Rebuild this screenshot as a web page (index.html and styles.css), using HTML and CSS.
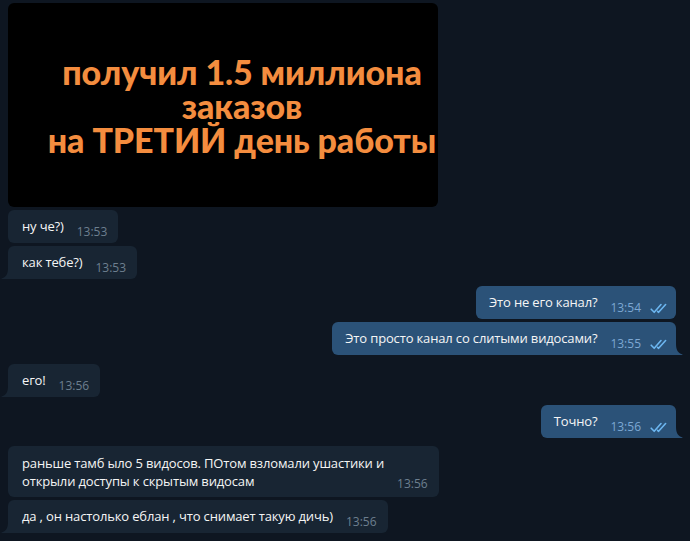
FILE: index.html
```html
<!DOCTYPE html>
<html lang="ru">
<head>
<meta charset="utf-8">
<link rel="stylesheet" href="styles.css">
</head>
<body>
<div class="chat">
  <div class="row in">
    <div class="photo">
      <div class="photo-text">получил 1.5 миллиона<br>заказов<br>на ТРЕТИЙ день работы</div>
    </div>
  </div>
  <div class="row in gap-s">
    <div class="bubble"><span class="text">ну че?)</span><span class="time">13:53</span></div>
  </div>
  <div class="row in gap-s">
    <div class="bubble tail"><span class="text">как тебе?)</span><span class="time">13:53</span>
      <svg class="tail-l" width="7" height="11" viewBox="0 0 7 11"><path d="M7 0 C7 6 5 9 1 10.2 Q0 10.6 0.6 11 H7 Z" fill="#182533"/></svg>
    </div>
  </div>
  <div class="row out gap-m">
    <div class="bubble"><span class="text">Это не его канал?</span><span class="time">13:54</span>
      <svg class="check" width="17" height="11" viewBox="0 0 17 11"><path d="M1.2 6.2 L4.2 9.3 L11 1.5 M7.6 8.4 L8.6 9.3 L15.6 1.5" stroke="#6cb6f0" stroke-width="1.6" fill="none" stroke-linecap="round" stroke-linejoin="round"/></svg>
    </div>
  </div>
  <div class="row out gap-s">
    <div class="bubble tail"><span class="text">Это просто канал со слитыми видосами?</span><span class="time">13:55</span>
      <svg class="check" width="17" height="11" viewBox="0 0 17 11"><path d="M1.2 6.2 L4.2 9.3 L11 1.5 M7.6 8.4 L8.6 9.3 L15.6 1.5" stroke="#6cb6f0" stroke-width="1.6" fill="none" stroke-linecap="round" stroke-linejoin="round"/></svg>
      <svg class="tail-r" width="7" height="11" viewBox="0 0 7 11"><path d="M0 0 C0 6 2 9 6 10.2 Q7 10.6 6.4 11 H0 Z" fill="#2b5278"/></svg>
    </div>
  </div>
  <div class="row in gap-xl">
    <div class="bubble tail"><span class="text">его!</span><span class="time">13:56</span>
      <svg class="tail-l" width="7" height="11" viewBox="0 0 7 11"><path d="M7 0 C7 6 5 9 1 10.2 Q0 10.6 0.6 11 H7 Z" fill="#182533"/></svg>
    </div>
  </div>
  <div class="row out gap-l">
    <div class="bubble tail"><span class="text">Точно?</span><span class="time">13:56</span>
      <svg class="check" width="17" height="11" viewBox="0 0 17 11"><path d="M1.2 6.2 L4.2 9.3 L11 1.5 M7.6 8.4 L8.6 9.3 L15.6 1.5" stroke="#6cb6f0" stroke-width="1.6" fill="none" stroke-linecap="round" stroke-linejoin="round"/></svg>
      <svg class="tail-r" width="7" height="11" viewBox="0 0 7 11"><path d="M0 0 C0 6 2 9 6 10.2 Q7 10.6 6.4 11 H0 Z" fill="#2b5278"/></svg>
    </div>
  </div>
  <div class="row in gap-l">
    <div class="bubble multi"><span class="text">раньше тамб ыло 5 видосов. ПОтом взломали ушастики и<br>открыли доступы к скрытым видосам</span><span class="time">13:56</span></div>
  </div>
  <div class="row in gap-s">
    <div class="bubble tail"><span class="text">да , он настолько еблан , что снимает такую дичь)</span><span class="time">13:56</span>
      <svg class="tail-l" width="7" height="11" viewBox="0 0 7 11"><path d="M7 0 C7 6 5 9 1 10.2 Q0 10.6 0.6 11 H7 Z" fill="#182533"/></svg>
    </div>
  </div>
</div>
</body>
</html>
```

FILE: styles.css
```css
html, body {
  margin: 0;
  padding: 0;
  background: #0e1621;
  height: 100%;
}

body {
  font-family: "Open Sans", "Noto Sans", sans-serif;
  color: #f5f5f5;
  overflow: hidden;
}

.chat {
  display: flex;
  flex-direction: column;
  padding: 3px 14px 0 8px;
}

.row {
  display: flex;
}

.row.in {
  justify-content: flex-start;
}

.row.out {
  justify-content: flex-end;
}

.row.gap-s {
  margin-top: 3px;
}

.row.gap-m {
  margin-top: 7px;
}

.row.gap-l {
  margin-top: 8px;
}

.row.gap-xl {
  margin-top: 9px;
}

.photo {
  width: 430px;
  height: 204px;
  background: #000;
  border-radius: 6px;
  display: flex;
  align-items: flex-start;
  justify-content: center;
}

.photo-text {
  margin-top: 52px;
  padding-left: 38px;
  font-family: Lato, "Noto Sans", sans-serif;
  font-weight: 900;
  font-size: 34px;
  line-height: 34px;
  color: #f48d3f;
  text-align: center;
  white-space: nowrap;
  letter-spacing: -0.1px;
}

.bubble {
  position: relative;
  display: flex;
  align-items: flex-end;
  gap: 13px;
  padding: 7px 11px 4px 14px;
  border-radius: 6px;
  font-size: 13px;
  letter-spacing: -0.15px;
}

.row.in .bubble {
  background: #182533;
}

.row.out .bubble {
  background: #2b5278;
  padding-left: 13px;
  padding-right: 9px;
  gap: 13px;
}

.row.in .bubble.tail {
  border-bottom-left-radius: 0;
}

.row.out .bubble.tail {
  border-bottom-right-radius: 0;
}

.text {
  line-height: 18px;
  margin-bottom: 4px;
  white-space: nowrap;
}

.time {
  font-size: 12px;
  line-height: 14px;
  color: #6d7f8f;
  letter-spacing: 0;
}

.row.out .time {
  color: #7da8d3;
}

.check {
  margin-left: -4px;
  margin-bottom: 1px;
  flex: none;
}

.bubble.multi {
  padding-top: 8px;
  padding-bottom: 3px;
}

.bubble.multi .time {
  margin-bottom: 3px;
}

.tail-l {
  position: absolute;
  left: -7px;
  bottom: 0;
}

.tail-r {
  position: absolute;
  right: -7px;
  bottom: 0;
}
```
